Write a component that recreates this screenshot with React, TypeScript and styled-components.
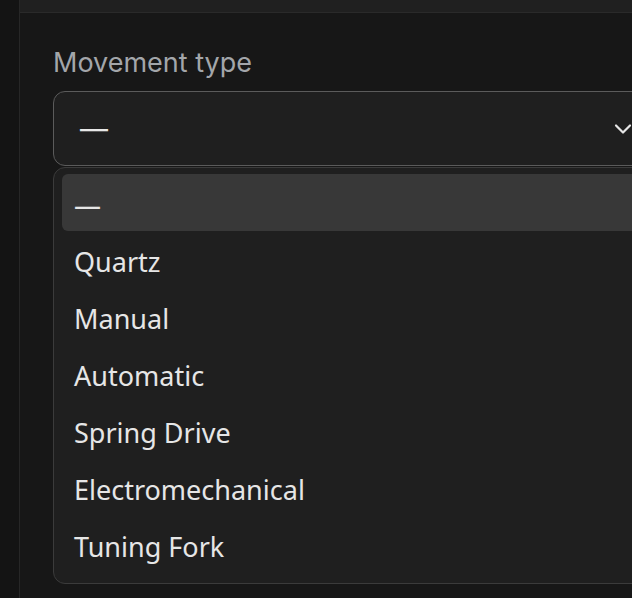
import React from "react";
import styled, { createGlobalStyle } from "styled-components";

const Global = createGlobalStyle`
  html, body { margin: 0; padding: 0; background: #141414; }
  body { width: 632px; height: 598px; overflow: hidden; }
`;

const Page = styled.div`
  display: flex;
  width: 632px;
  height: 598px;
  overflow: hidden;
  font-family: Inter, "Liberation Sans", sans-serif;
`;

const Rail = styled.div`
  width: 19px;
  flex: none;
  background: #141414;
  border-right: 1px solid #272727;
`;

const Main = styled.div`
  flex: 1;
  display: flex;
  flex-direction: column;
  background: #171717;
  min-width: 0;
`;

const TopBar = styled.div`
  height: 12px;
  flex: none;
  background: #202020;
  border-bottom: 1px solid #2a2a2a;
`;

const Content = styled.div`
  position: relative;
  padding: 33px 0 0 33px;
  display: flex;
  flex-direction: column;
  gap: 20px;
`;

const Field = styled.div`
  display: flex;
  flex-direction: column;
  gap: 11px;
  width: 600px;
`;

const Label = styled.div`
  font-size: 27px;
  line-height: 34px;
  color: #a3a6aa;
`;

const SelectBox = styled.div`
  box-sizing: border-box;
  height: 75px;
  border: 1px solid #5b5b5b;
  border-radius: 12px;
  background: #1f1f1f;
  display: flex;
  align-items: center;
  justify-content: space-between;
  padding: 0 20px 0 26px;
  color: #e8e8e8;
  font-size: 28px;
`;

const Ghost = styled.div<{ $h: number }>`
  box-sizing: border-box;
  height: ${(p) => p.$h}px;
  border: 1px solid #3d3d3d;
  border-radius: 12px;
  background: #1f1f1f;
`;

const Menu = styled.div`
  position: absolute;
  left: 33px;
  top: 154px;
  width: 600px;
  height: 417px;
  box-sizing: border-box;
  background: #1f1f1f;
  border: 1px solid #3b3b3b;
  border-radius: 12px;
  padding: 6px 8px;
  display: flex;
  flex-direction: column;
  font-family: "Noto Sans", "Open Sans", sans-serif;
`;

const Option = styled.div<{ $active?: boolean }>`
  box-sizing: border-box;
  height: 57px;
  flex: none;
  display: flex;
  align-items: center;
  padding: 3px 0 0 12px;
  border-radius: 6px;
  background: ${(p) => (p.$active ? "#383838" : "transparent")};
  color: #e6e6e6;
  font-size: 27px;
`;

const options = ["—", "Quartz", "Manual", "Automatic", "Spring Drive", "Electromechanical", "Tuning Fork"];

export default function App() {
  return (
    <>
      <Global />
      <Page>
        <Rail />
        <Main>
          <TopBar />
          <Content>
            <Field>
              <Label>Movement type</Label>
              <SelectBox>
                <span>—</span>
                <svg width="18" height="12" viewBox="0 0 18 12" fill="none">
                  <path d="M2 2.5l7 7 7-7" stroke="#e6e6e6" strokeWidth="2.2" strokeLinecap="round" strokeLinejoin="round" />
                </svg>
              </SelectBox>
            </Field>
            <Ghost $h={88} />
            <Ghost $h={90} />
            <Ghost $h={90} />
            <Menu>
              {options.map((o, i) => (
                <Option key={o} $active={i === 0}>{o}</Option>
              ))}
            </Menu>
          </Content>
        </Main>
      </Page>
    </>
  );
}
